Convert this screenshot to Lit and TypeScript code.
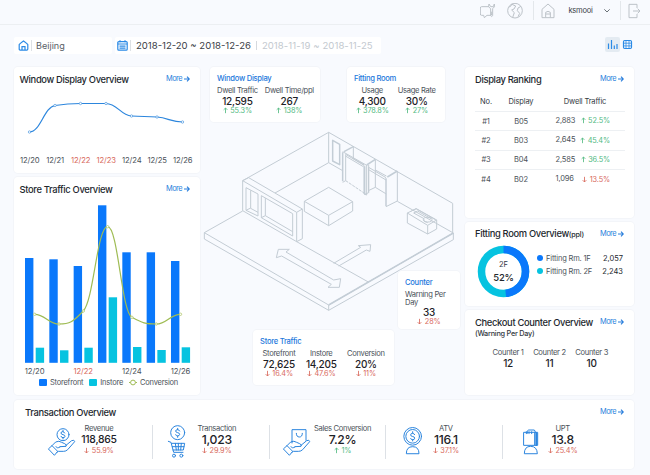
import { LitElement, html, svg, css } from "lit";
import { customElement, property } from "lit/decorators.js";

type Pt = [number, number];

interface Stat {
  label: string;
  value: string;
  delta?: string;
  up?: boolean;
}

/** Monotone cubic path through the points. */
function smooth(p: Pt[]): string {
  const n = p.length;
  const s: number[] = [];
  for (let i = 0; i < n - 1; i++) s.push((p[i + 1][1] - p[i][1]) / (p[i + 1][0] - p[i][0]));
  const t: number[] = [];
  for (let i = 0; i < n; i++) {
    if (i === 0 || i === n - 1) t.push(0);
    else if (s[i - 1] * s[i] <= 0) t.push(0);
    else t.push(Math.sign(s[i]) * Math.min(Math.abs(s[i]), Math.abs(s[i - 1]), Math.abs(s[i] + s[i - 1]) / 4) * 2);
  }
  let d = `M${p[0][0]} ${p[0][1]}`;
  for (let i = 0; i < n - 1; i++) {
    const k = (p[i + 1][0] - p[i][0]) / 2.3;
    d += `C${p[i][0] + k} ${p[i][1] + t[i] * k} ${p[i + 1][0] - k} ${p[i + 1][1] - t[i + 1] * k} ${p[i + 1][0]} ${p[i + 1][1]}`;
  }
  return d;
}

const arrow = (up: boolean) => html`<svg class="arr" viewBox="0 0 6 8">
  ${up ? svg`<path d="M3 7.2V1M.8 3.2 3 1l2.2 2.2" />` : svg`<path d="M3 .8V7M.8 4.8 3 7l2.2-2.2" />`}
</svg>`;

const delta = (text: string, up: boolean) =>
  html`<span class="delta ${up ? "up" : "down"}">${arrow(up)}${text}</span>`;

const stat = (s: Stat) => html`<div class="stat">
  <span class="label">${s.label}</span>
  <span class="value">${s.value}</span>
  ${s.delta ? delta(s.delta, !!s.up) : ""}
</div>`;

const shared = css`
  * { box-sizing: border-box; }
  svg { display: block; flex: none; fill: none; }
  .card, .callout {
    background: #fff;
    border-radius: 4px;
    box-shadow: 0 0 0 1px #f3f5f9;
  }
  .head {
    display: flex;
    justify-content: space-between;
    align-items: center;
    height: 12px;
  }
  h2 { margin: 0; font-size: 9.4px; font-weight: 500; line-height: 12px; letter-spacing: -0.34px; color: #23282e; white-space: nowrap; }
  h2 small { font-size: 7.2px; font-weight: 500; letter-spacing: -0.2px; }
  .more { display: flex; align-items: center; gap: 1.5px; margin: -1px -0.7px 0 0; font-size: 7.4px; line-height: 10px; letter-spacing: -0.45px; color: #2a7fdc; }
  .more svg { width: 6px; height: 6px; stroke: currentColor; stroke-width: 1.1; }
  .stat { display: flex; flex-direction: column; align-items: center; white-space: nowrap; }
  .label { font-size: 7.6px; line-height: 10px; letter-spacing: -0.32px; color: #4b5259; }
  .value { font-size: 10px; line-height: 10px; letter-spacing: -0.25px; font-weight: 500; color: #1d2227; }
  .delta { display: flex; align-items: center; gap: 2.5px; font-size: 7.3px; line-height: 10px; letter-spacing: -0.12px; white-space: nowrap; }
  .arr { width: 5px; height: 7px; margin-top: -1px; stroke: currentColor; stroke-width: 1; }
  .up { color: #50b97f; }
  .down { color: #d8695c; }
`;

@customElement("panel-card")
class PanelCard extends LitElement {
  @property() heading = "";
  @property() note = "";
  static styles = [
    shared,
    css`
      :host { display: block; }
      .card { height: 100%; padding: 6.5px 11px 0 var(--pad, 10px); }
    `,
  ];
  render() {
    return html`<section class="card">
      <div class="head">
        <h2>${this.heading}${this.note ? html`<small>${this.note}</small>` : ""}</h2>
        <span class="more">More<svg viewBox="0 0 6 6"><path d="M0 3h5.2M3 .7 5.3 3 3 5.3" /></svg></span>
      </div>
      <slot></slot>
    </section>`;
  }
}

@customElement("window-chart")
class WindowChart extends LitElement {
  static styles = css`
    :host { display: block; }
    svg { display: block; width: 186px; height: 82px; overflow: visible; }
    .line { fill: none; stroke: #2c86dd; stroke-width: 1.2; }
    .dot { fill: #fff; stroke: #4a97e0; stroke-width: 0.7; }
    text { font-size: 7.7px; letter-spacing: -0.1px; text-anchor: middle; fill: #4b5259; }
    .weekend { fill: #d8695c; }
  `;
  render() {
    const pts: Pt[] = [[29.5, 132], [55, 105.5], [80.5, 103.5], [106, 103.5], [131.5, 116], [157, 117], [182.5, 122]];
    const days = ["12/20", "12/21", "12/22", "12/23", "12/24", "12/25", "12/26"];
    return html`<svg viewBox="14 86 186 82">
      <path class="line" d=${smooth(pts)} />
      ${pts.map(([x, y]) => svg`<circle class="dot" cx=${x} cy=${y} r="1.2" />`)}
      ${days.map((d, i) => svg`<text class=${i === 2 || i === 3 ? "weekend" : ""} x=${29.7 + i * 25.5} y="163.2">${d}</text>`)}
    </svg>`;
  }
}

@customElement("store-chart")
class StoreChart extends LitElement {
  static styles = css`
    :host { display: block; }
    svg { display: block; width: 186px; height: 182px; overflow: visible; }
    .front { fill: #0a78fb; }
    .instore { fill: #06c3e0; }
    .line { fill: none; stroke: #9fbc54; stroke-width: 1.2; }
    .dot { fill: #fff; stroke: #a9c25e; stroke-width: 0.7; }
    text { font-size: 7.7px; letter-spacing: -0.1px; text-anchor: middle; fill: #4b5259; }
    .weekend { fill: #d8695c; }
    .legend { display: flex; align-items: center; padding-left: 25px; height: 10px; font-size: 7.5px; letter-spacing: -0.23px; line-height: 10px; color: #4b5259; }
    .legend span { display: flex; align-items: center; gap: 3px; margin-right: 6px; }
    .legend i { width: 8px; height: 6.5px; border-radius: 1px; }
    .legend .a { background: #0a78fb; }
    .legend .b { background: #06c3e0; }
    .legend svg { width: 8px; height: 7px; stroke: #9fbc54; fill: none; }
  `;
  render() {
    const front = [258, 259.3, 266, 205.3, 252.3, 252.3, 261];
    const instore = [347.7, 350.3, 347.7, 297.3, 347, 350, 347.3];
    const rate = [314.3, 324, 311, 226.7, 317.3, 324, 314.3];
    const base = 362.8;
    const pts: Pt[] = rate.map((y, i) => [34.7 + i * 24.3, y]);
    const days = ["12/20", "12/22", "12/24", "12/26"];
    return html`<svg viewBox="14 196 186 182">
        ${front.map((y, i) => svg`<rect class="front" x=${25 + i * 24.33} y=${y} width="8.4" height=${base - y} />`)}
        ${instore.map((y, i) => svg`<rect class="instore" x=${35.7 + i * 24.33} y=${y} width="8.4" height=${base - y} />`)}
        <path class="line" d=${smooth(pts)} />
        ${pts.map(([x, y]) => svg`<circle class="dot" cx=${x} cy=${y} r="1.2" />`)}
        ${days.map((d, i) => svg`<text class=${i === 1 ? "weekend" : ""} x=${34.6 + i * 48.6} y="373.6">${d}</text>`)}
      </svg>
      <div class="legend">
        <span><i class="a"></i>Storefront</span><span><i class="b"></i>Instore</span>
        <span><svg viewBox="0 0 8 7"><path d="M0 3.5h1.5M6.5 3.5H8" /><circle cx="4" cy="3.5" r="2.4" /></svg>Conversion</span>
      </div>`;
  }
}

@customElement("store-plan")
class StorePlan extends LitElement {
  static styles = css`
    :host { display: block; }
    svg { display: block; width: 265px; height: 190px; fill: none; stroke: #c3ccd4; stroke-width: 3; stroke-linejoin: round; }
    .bold { stroke-width: 4.5; stroke: #c3cdd6; }
  `;
  render() {
    return html`<svg viewBox="0 0 795 570">
      <path d="M128 258 13 323v19L386 556l374-212v-20L386 540 13 323M386 540v16M760 324 592 229M505 471 290 350" />
      <path d="M386 540 760 324" class="bold" />
      <path d="M128 167 386 22 758 235v87M386 22v91L225 204M386 113l42 24" />
      <path class="bold" d="M398 46v62l21 11V58z" />
      <path d="M128 167v90l162 93V262zM128 167l18-9 161 94-17 10M307 252v89l-17 9" />
      <path d="M138 188v68l36 17v-66zM152 196v54l22 12M138 256l14-7" />
      <path d="M184 212v66l94 55v-67zM196 219v53l82 48M184 278l12-6" />
      <path d="M313 229 386 187l72 43v28l-72 44-73-43zM313 229l73 42 72-41M386 271v31" />
      <path class="bold" d="M428 82v87M432 80l28-15" />
      <path d="M428 172l9-5v-79l55 33v86l8 3V120M438 94l52 31M428 80l72 41M460 65v36l32 18" />
      <path d="M437 167l55 37" stroke-dasharray="9 3" />
      <path class="bold" d="M494 124v84M500 120l26-17" />
      <path d="M494 208l12-5v-76l52 31M506 134l52 31M506 203V120M526 103v84l-19 9M526 187l33 20M526 135l33 18" />
      <path class="bold" d="M558 160v84M562 156l30-18" />
      <path d="M558 245l34-17v-90" />
      <path d="M622 264v30l61 33 27-15v-27l-61-34zM622 264l61 37 27-16M683 301v26M634 258l14-7 58 33M641 264l12-6 40 23" />
      <ellipse cx="683" cy="284" rx="13" ry="7" />
      <path d="M641 264l31 17M672 283v5l11 5" />
      <path d="M229 398l6-25h33l-10 8 143 84 21-4-4 26h-34l10-9-149-85z" />
      <path d="M401 415l81-48-7-5 37-3-2 20-11-4-83 48" />
    </svg>`;
  }
}

const hand = svg`<path d="M148 159l10-9 17 17-9 11zM158 150l11-11q10-5 18 1l9 4q8 4 4 8l-18 1M200 149l17-14q8-4 9 3l-21 24q-5 5-12 5h-16l-4 3M170 153q3 7 12 1" />`;
const coin = svg`<circle cx="191" cy="117" r="18" /><path d="M196 112q-2-4-6-4-5 0-5 4t6 5 6 5-6 4q-5 0-6-4M191 104v4M191 126v4" />`;

@customElement("metric-item")
class MetricItem extends LitElement {
  @property({ attribute: false }) stat: Stat = { label: "", value: "" };
  @property() icon = "";
  static styles = [
    shared,
    css`
      :host { display: flex; align-items: flex-start; }
      .icon { width: 30px; height: 34px; stroke: #2b85de; stroke-width: 3; stroke-linecap: round; stroke-linejoin: round; }
      .value { font-size: var(--size, 12.2px); line-height: 12px; }
      .stat { width: 60px; margin: -1px 0 0 var(--shift, 0); }
      .delta { margin-top: 0.7px; }
    `,
  ];
  private art() {
    switch (this.icon) {
      case "revenue":
        return svg`${hand}${coin}`;
      case "cart":
        return svg`<g transform="translate(-352 0)"><circle cx="536" cy="111" r="21" /><path d="M542 106q-2-4-6-4-6 0-6 4t6 5 6 5-6 5q-5 0-6-4M536 98v4M536 121v4M508 137l8 3 8 30h28M518 143h39l-4 20h-31M520 153h35M529 143l3 20M538 143v20M547 143l-2 20" /><circle cx="525" cy="180" r="4.5" /><circle cx="547" cy="180" r="4.5" /></g>`;
      case "bag":
        return svg`${hand}<path d="M173 142v-40h42v32M186 113q0 11 9 11t9-11" />`;
      case "counter":
        return svg`<g transform="translate(-358 0)"><circle cx="548" cy="122" r="26.5" /><circle cx="548" cy="122" r="20.5" /><path d="M554 117q-2-4-6-4-6 0-6 4.5t6 5 6 5-6 5q-5 0-6-4M548 108v4M548 132v4M529 173q0-20 19-20t19 20z" /></g>`;
      default:
        return svg`<g transform="translate(-107 0)"><path d="M277 110h32v39h-32zM309 110h9v39h-9M287 113v-5q0-4 4-5h16q4 0 4 7M284 114v-6M292 114v-6M300 114v-6M278 173q0-21 19-21t20 21z" /><path d="M314 112v36" stroke-width="6" /></g>`;
    }
  }
  render() {
    return html`<svg class="icon" viewBox="143 88 90 102">${this.art()}</svg>${stat(this.stat)}`;
  }
}

@customElement("app-root")
class AppRoot extends LitElement {
  static styles = [
    shared,
    css`
      :host {
        display: flex;
        flex-direction: column;
        width: 650px;
        height: 475px;
        overflow: hidden;
        background: #f8fafe;
        font-family: Inter, "Liberation Sans", sans-serif;
        color: #4b5259;
      }
      header {
        display: flex;
        align-items: center;
        height: 25px;
        padding: 0 9px 3px 480px;
        border-bottom: 1px solid #eceff2;
        font-size: 7.6px;
        color: #3c4248;
      }
      header svg { height: 16px; stroke: #bcc2c8; stroke-width: 3; stroke-linejoin: round; }
      .chat { width: 16px; }
      .globe { width: 16px; margin-left: 11px; }
      .sep { width: 1px; height: 19px; background: #e3e7eb; margin-left: 10px; }
      .home { width: 14px; margin-left: 7px; }
      .user { width: 24px; margin-left: 14px; letter-spacing: -0.3px; white-space: nowrap; }
      header .chev { width: 8px; height: 6px; margin-left: 11px; stroke: #6a7177; }
      header .chev + .sep { margin-left: 9px; }
      .exit { width: 13px; margin-left: 7px; }

      .toolbar { display: flex; height: 17px; margin: 12px 15px 0 14px; font-size: 9.55px; }
      .field { display: flex; align-items: center; background: #fff; border-radius: 2px; white-space: nowrap; }
      .field svg { width: 11px; height: 11px; stroke: #2b8ae6; stroke-width: 1.2; }
      .field b { width: 1px; height: 11px; background: #dde1e5; margin-left: 2px; }
      .city { width: 98px; padding-left: 3.5px; }
      .city span { margin-left: 4.5px; font-size: 9.1px; color: #5a6167; }
      .dates { width: 266px; margin-left: 3px; padding-left: 2px; }
      .dates .now { margin-left: 5px; color: #3b4147; }
      .dates .bar { margin-left: 5px; background: #d5d9de; height: 9px; }
      .dates .prev { margin-left: 5px; letter-spacing: 0.07px; color: #c3c9cf; }
      .views { display: flex; gap: 0.5px; margin-left: auto; }
      .views span { display: grid; place-items: center; width: 15px; height: 15px; border-radius: 2px; }
      .views .on { background: #e4ebf2; }
      .views svg { width: 11px; height: 11px; stroke: #2b8ae6; stroke-width: 1.2; }

      main {
        display: grid;
        grid-template-columns: 186px 265px 169px;
        height: 328px;
        margin: 13px 0 0 14px;
      }
      .col { display: flex; flex-direction: column; gap: 4px; }
      .left { --pad: 5.5px; }
      .left window-chart, .left store-chart { margin-left: -5.5px; }
      .window { height: 106px; }
      .store { flex: 1; }
      .ranking { height: 151px; }
      .fitting { height: 84px; }
      .checkout { flex: 1; }

      .stage { position: relative; padding-top: 58px; }
      .callout { position: absolute; padding: 7px 7px 0; }
      .callout h3 { margin: 0 0 2px; font-size: 7.6px; line-height: 10px; letter-spacing: -0.27px; font-weight: 500; color: #1d78dc; white-space: nowrap; }
      .callout .value { margin-top: -0.4px; }
      .stats { display: flex; }
      .c-window { left: 10px; top: 0; width: 110px; height: 55px; }
      .c-fitting { left: 147px; top: 0; width: 98px; height: 55px; }
      .c-store { left: 53px; top: 263px; width: 141px; height: 55px; }
      .c-counter { left: 198px; top: 204px; width: 62px; height: 58px; }
      .c-window .stats { gap: 7px; }
      .c-fitting .stats { gap: 9px; padding-left: 1.5px; }
      .c-store .stats { gap: 10.5px; padding-left: 2.5px; }
      .c-counter .label { width: 48px; white-space: normal; line-height: 8px; margin: 1px 0 0.7px; }

      table { width: 150px; margin-top: 7px; border-collapse: collapse; table-layout: fixed; font-size: 7.5px; letter-spacing: -0.15px; text-align: center; }
      th { height: 19px; padding: 0 0 1px; font-weight: 400; color: #33393f; }
      td { height: 19.3px; padding: 0; border-top: 1px solid #edf0f3; }
      .dwell { display: flex; align-items: center; padding-left: 10.5px; }
      .dwell span:first-child { width: 24.5px; line-height: 10px; text-align: left; }
      .dwell .delta { width: 30px; justify-content: flex-end; padding-top: 0.6px; }

      .fit { display: flex; padding: 4.5px 0 0 2px; }
      .donut { width: 53px; height: 53px; }
      .donut text { text-anchor: middle; fill: #33393f; font-size: 7.5px; }
      .donut .pct { font-size: 9.5px; letter-spacing: -0.3px; font-weight: 500; fill: #23282e; }
      .rows { flex: 1; padding: 7px 0 0 7px; }
      .row { display: flex; align-items: center; height: 12.7px; font-size: 7.5px; letter-spacing: -0.18px; white-space: nowrap; }
      .row i { width: 6px; height: 6px; border-radius: 50%; margin-right: 3px; background: #06c3e0; }
      .row .one { background: #0a78fb; }
      .row em { margin-left: auto; font-style: normal; letter-spacing: 0; color: #23282e; }

      .sub { margin: 0; font-size: 7.3px; line-height: 10px; letter-spacing: -0.25px; font-weight: 500; color: #33393f; }
      .counters { display: flex; gap: 9.5px; margin: 9.5px 0 0 17.5px; }

      .bottom { height: 69px; margin: 5px 16px 0 14px; --pad: 11px; }
      .metrics { display: flex; margin: 6px -11px 0 11px; }
      .metrics metric-item { flex: none; width: 116.8px; height: 34px; padding-left: var(--lead); border-right: 1px solid #dde1e6; }
      .metrics metric-item:last-child { border: 0; width: 100px; }
      .m-rev { --lead: 11px; --shift: -8px; --size: 10.4px; }
      .m-tran { --lead: 11px; --shift: -7px; }
      .m-sales { --lead: 12.5px; --shift: 0.5px; }
      .m-atv { --lead: 10.5px; --shift: -11px; }
      .m-upt { --lead: 11.5px; --shift: -12px; }
    `,
  ];

  private ranking = [
    ["#1", "B05", "2,883", "52.5%", true],
    ["#2", "B03", "2,645", "45.4%", true],
    ["#3", "B04", "2,585", "36.5%", true],
    ["#4", "B02", "1,096", "13.5%", false],
  ] as const;

  private donut() {
    const r = 22;
    const c = 2 * Math.PI * r;
    return html`<svg class="donut" viewBox="0 0 53 53">
      <circle cx="26.5" cy="26.5" r=${r} stroke="#06c3e0" stroke-width="7.5" />
      <circle cx="26.5" cy="26.5" r=${r} stroke="#0a78fb" stroke-width="7.5" stroke-dasharray="${c * 0.48} ${c}" transform="rotate(-90 26.5 26.5)" />
      <text x="26.5" y="22.2">2F</text>
      <text class="pct" x="26.5" y="35.5">52%</text>
    </svg>`;
  }

  render() {
    return html`
      <header>
        <svg class="chat" viewBox="240 8 48 48"><path d="M266 19h-21q-4 0-4 4v18q0 4 4 4h6l2 7 8-7h10q4 0 4-4v-7" /><path d="M267 11q-5 10 5 14v21q3 5 6 0V25q8-4 5-14l-3 8h-8z" /></svg>
        <svg class="globe" viewBox="321 8 48 48"><circle cx="345" cy="31" r="22" /><path d="M326 21q9-3 10-11M336 12l11 5-5 9-7 3 8 8-5 14M363 18l-9 5-2 8 7 8-5 10" /></svg>
        <span class="sep"></span>
        <svg class="home" viewBox="423 8 42 48"><path d="M426 27 444 11l18 16v25h-36zM437 51V36q7-6 14 0v15M438 41h13" /></svg>
        <span class="user">ksmooi</span>
        <svg class="chev" viewBox="0 0 24 18"><path d="M4 4l8 8 8-8" /></svg>
        <span class="sep"></span>
        <svg class="exit" viewBox="684 8 39 48"><path d="M711 23V12h-24v40h24V41M699 32h21M713 25l7 7-7 7" /></svg>
      </header>

      <div class="toolbar">
        <div class="field city">
          <svg viewBox="0 0 11 11"><path d="M1.2 4.6Q1.200 4 5.500.9 9.800 4 9.800 4.600v4.500q0 1-1 1H2.200q-1 0-1-1zM4 10V6.600h3V10" /></svg>
          <b></b><span>Beijing</span>
        </div>
        <div class="field dates">
          <svg viewBox="0 0 11 11"><rect x=".8" y="1.6" width="9.4" height="8.6" rx="1" /><path d="M.8 4h9.4M3 .2v2M8 .2v2M2.5 6.2h6M2.5 8.2h6" /></svg>
          <b></b><span class="now">2018-12-20 ~ 2018-12-26</span><b class="bar"></b><span class="prev">2018-11-19 ~ 2018-11-25</span>
        </div>
        <div class="views">
          <span class="on"><svg viewBox="0 0 11 11"><path d="M1.5 10V4.5M4.5 10V1M7.3 10V6.5M10 10V5" /></svg></span>
          <span><svg viewBox="0 0 11 11"><rect x="1.5" y="1.5" width="8" height="8" rx="1.2" /><path d="M4 1.5v8M7 1.5v8M1.5 4.2h8M1.5 6.9h8" stroke-width=".8" /></svg></span>
        </div>
      </div>

      <main>
        <div class="col left">
          <panel-card class="window" heading="Window Display Overview"><window-chart></window-chart></panel-card>
          <panel-card class="store" heading="Store Traffic Overview"><store-chart></store-chart></panel-card>
        </div>

        <div class="stage">
          <store-plan></store-plan>
          <div class="callout c-window">
            <h3>Window Display</h3>
            <div class="stats">
              ${stat({ label: "Dwell Traffic", value: "12,595", delta: "55.3%", up: true })}
              ${stat({ label: "Dwell Time/ppl", value: "267", delta: "138%", up: true })}
            </div>
          </div>
          <div class="callout c-fitting">
            <h3>Fitting Room</h3>
            <div class="stats">
              ${stat({ label: "Usage", value: "4,300", delta: "378.8%", up: true })}
              ${stat({ label: "Usage Rate", value: "30%", delta: "27%", up: true })}
            </div>
          </div>
          <div class="callout c-store">
            <h3>Store Traffic</h3>
            <div class="stats">
              ${stat({ label: "Storefront", value: "72,625", delta: "16.4%" })}
              ${stat({ label: "Instore", value: "14,205", delta: "47.6%" })}
              ${stat({ label: "Conversion", value: "20%", delta: "11%" })}
            </div>
          </div>
          <div class="callout c-counter">
            <h3>Counter</h3>
            ${stat({ label: "Warning Per Day", value: "33", delta: "28%" })}
          </div>
        </div>

        <div class="col">
          <panel-card class="ranking" heading="Display Ranking">
            <table>
              <colgroup><col width="22" /><col width="48" /><col width="80" /></colgroup>
              <tr><th>No.</th><th>Display</th><th>Dwell Traffic</th></tr>
              ${this.ranking.map(
                ([no, name, n, pct, up]) => html`<tr>
                  <td>${no}</td><td>${name}</td>
                  <td><div class="dwell"><span>${n}</span>${delta(pct, up)}</div></td>
                </tr>`
              )}
            </table>
          </panel-card>
          <panel-card class="fitting" heading="Fitting Room Overview" note="(ppl)">
            <div class="fit">
              ${this.donut()}
              <div class="rows">
                <div class="row"><i class="one"></i>Fitting Rm. 1F<em>2,057</em></div>
                <div class="row"><i></i>Fitting Rm. 2F<em>2,243</em></div>
              </div>
            </div>
          </panel-card>
          <panel-card class="checkout" heading="Checkout Counter Overview">
            <p class="sub">(Warning Per Day)</p>
            <div class="counters">
              ${[["1", "12"], ["2", "11"], ["3", "10"]].map(([n, v]) => stat({ label: `Counter ${n}`, value: v }))}
            </div>
          </panel-card>
        </div>
      </main>

      <panel-card class="bottom" heading="Transaction Overview">
        <div class="metrics">
          <metric-item class="m-rev" icon="revenue" .stat=${{ label: "Revenue", value: "118,865", delta: "55.9%" }}></metric-item>
          <metric-item class="m-tran" icon="cart" .stat=${{ label: "Transaction", value: "1,023", delta: "29.9%" }}></metric-item>
          <metric-item class="m-sales" icon="bag" .stat=${{ label: "Sales Conversion", value: "7.2%", delta: "1%", up: true }}></metric-item>
          <metric-item class="m-atv" icon="counter" .stat=${{ label: "ATV", value: "116.1", delta: "37.1%" }}></metric-item>
          <metric-item class="m-upt" icon="bags" .stat=${{ label: "UPT", value: "13.8", delta: "25.4%" }}></metric-item>
        </div>
      </panel-card>
    `;
  }
}
